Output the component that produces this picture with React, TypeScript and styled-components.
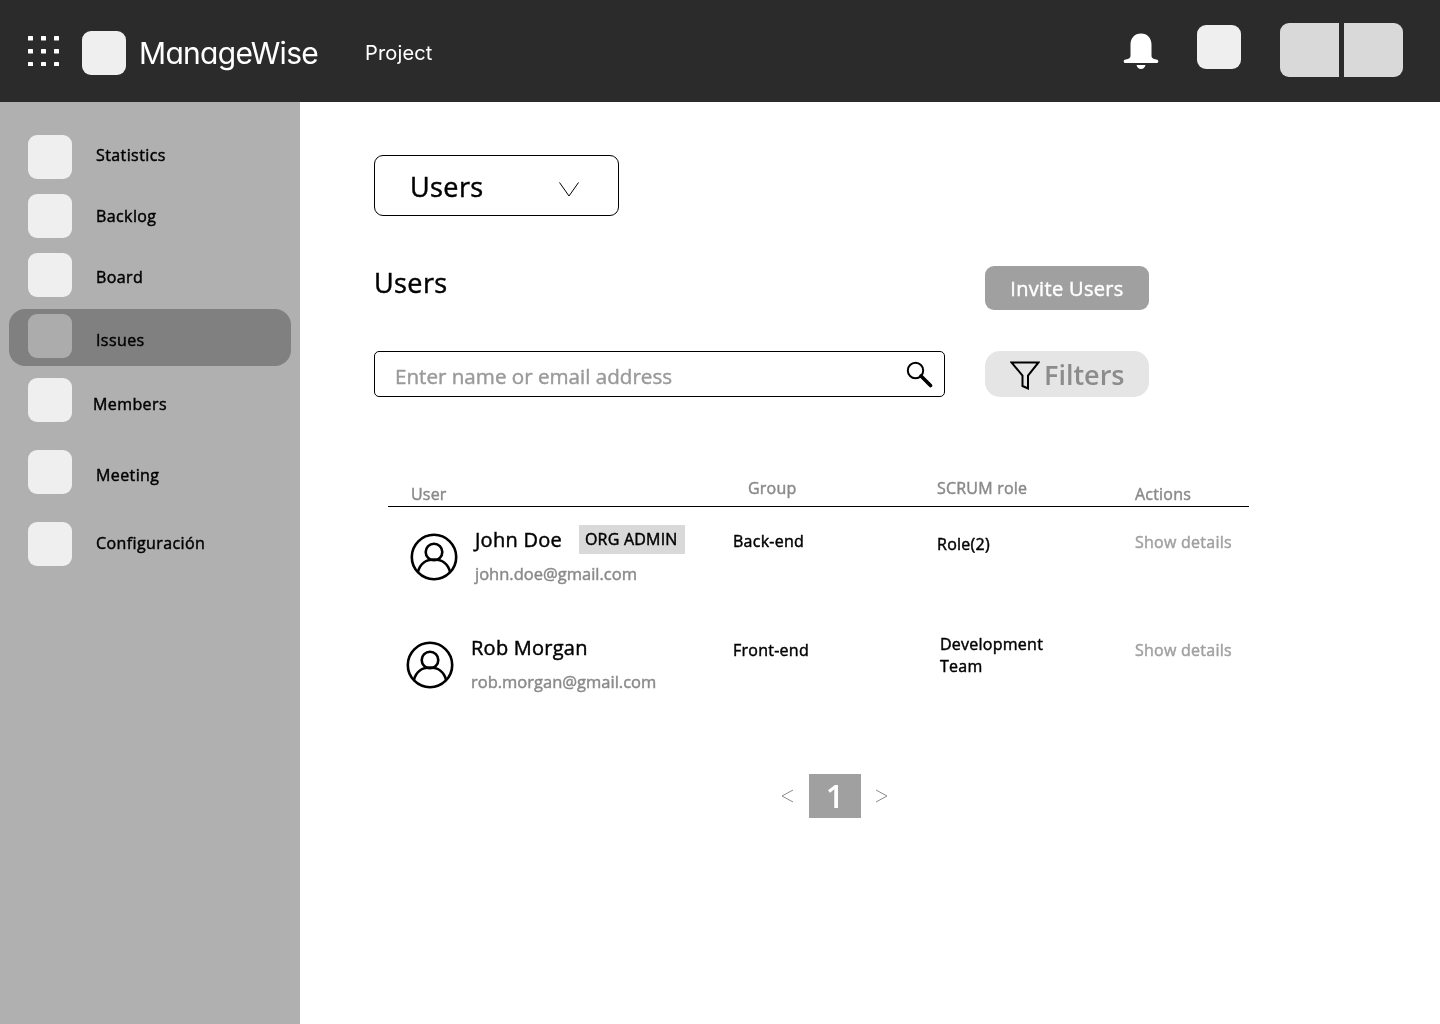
import React from "react";
import styled, { createGlobalStyle, css } from "styled-components";

const Global = createGlobalStyle`
  html, body { margin: 0; padding: 0; background: #fff; }
  body { font-family: "Open Sans", "Liberation Sans", sans-serif; color: #000; }
  * { box-sizing: border-box; }
`;

const medium = css`
  font-weight: 400;
  -webkit-text-stroke: 0.45px currentColor;
`;

const Page = styled.div`
  width: 1440px;
  height: 1024px;
  display: flex;
  flex-direction: column;
  overflow: hidden;
  will-change: transform;
`;

const TopBar = styled.header`
  height: 102px;
  background: #2b2b2b;
  display: flex;
  align-items: center;
  flex: none;
  padding: 4px 0 0 28px;
`;

const GridIcon = styled.svg`
  flex: none;
  margin-bottom: 4px;
`;

const LogoTile = styled.div`
  width: 44px;
  height: 44px;
  border-radius: 9px;
  background: #efefef;
  margin-left: 22px;
  flex: none;
`;

const Brand = styled.div`
  font-family: "Inter", sans-serif;
  font-feature-settings: "cv11" 1;
  font-weight: 400;
  font-size: 30px;
  line-height: 40px;
  letter-spacing: -0.7px;
  color: #fff;
  margin-left: 13px;
  width: 226px;
  white-space: nowrap;
`;

const ProjectLabel = styled.div`
  font-family: "Inter", sans-serif;
  font-weight: 400;
  font-size: 20px;
  letter-spacing: 0.15px;
  line-height: 28px;
  color: #fff;
  width: 789px;
`;

const TopActions = styled.div`
  display: flex;
  align-items: flex-start;
  margin-left: -32px;
  padding-bottom: 6px;
`;

const BellSlot = styled.div`
  width: 38px;
  height: 38px;
  margin-top: 10px;
  flex: none;
`;

const SmallTile = styled.div`
  width: 44px;
  height: 44px;
  border-radius: 9px;
  background: #efefef;
  margin-left: 37px;
  margin-top: 2px;
`;

const SplitGroup = styled.div`
  display: flex;
  gap: 5px;
  margin-left: 39px;
`;

const SplitPart = styled.div<{ $side: "left" | "right" }>`
  width: 59px;
  height: 54px;
  background: #d9d9d9;
  border-radius: ${(p) => (p.$side === "left" ? "9px 0 0 9px" : "0 9px 9px 0")};
`;

const Body = styled.div`
  flex: 1;
  display: flex;
  min-height: 0;
`;

const Sidebar = styled.nav`
  width: 300px;
  flex: none;
  background: #b0b0b0;
  padding-top: 33px;
  display: flex;
  flex-direction: column;
`;

const NavItem = styled.div<{ $gap: number; $active?: boolean }>`
  display: flex;
  align-items: center;
  margin-top: ${(p) => p.$gap}px;
  margin-left: ${(p) => (p.$active ? 9 : 28)}px;
  width: ${(p) => (p.$active ? "282px" : "auto")};
  height: ${(p) => (p.$active ? 57 : 44)}px;
  padding-left: ${(p) => (p.$active ? 19 : 0)}px;
  border-radius: ${(p) => (p.$active ? "16px" : "0")};
  background: ${(p) => (p.$active ? "#808080" : "transparent")};
`;

const NavIcon = styled.div<{ $active?: boolean }>`
  width: 44px;
  height: 44px;
  border-radius: 9px;
  background: ${(p) => (p.$active ? "#acacac" : "#efefef")};
  flex: none;
  margin-bottom: ${(p) => (p.$active ? 3 : 0)}px;
`;

const NavLabel = styled.span<{ $x?: number; $y?: number }>`
  ${medium}
  font-size: 16px;
  letter-spacing: 0.4px;
  line-height: 22px;
  margin-left: ${(p) => p.$x ?? 24}px;
  margin-top: ${(p) => p.$y ?? 0}px;
  color: #000;
`;

const Main = styled.main`
  flex: 1;
  padding: 53px 0 0 74px;
`;

const Dropdown = styled.div`
  ${medium}
  width: 245px;
  height: 61px;
  border: 1px solid #000;
  border-radius: 9px;
  display: flex;
  align-items: center;
  justify-content: space-between;
  padding: 2px 39px 0 35px;
  font-size: 27px;
  letter-spacing: 0.4px;
  line-height: 36px;
`;

const Chevron = styled.svg`
  margin-top: 5px;
`;

const TitleRow = styled.div`
  display: flex;
  align-items: flex-start;
  margin-top: 50px;
  width: 775px;
  justify-content: space-between;
`;

const Title = styled.h1`
  ${medium}
  margin: -1px 0 0;
  font-size: 27px;
  letter-spacing: 0.4px;
  line-height: 36px;
`;

const InviteButton = styled.button`
  ${medium}
  width: 164px;
  height: 44px;
  border: 0;
  border-radius: 9px;
  background: #a0a0a0;
  color: #fff;
  font-family: inherit;
  font-size: 20px;
  letter-spacing: 0.33px;
  padding: 0;
`;

const SearchRow = styled.div`
  display: flex;
  justify-content: space-between;
  width: 775px;
  margin-top: 41px;
`;

const SearchBox = styled.div`
  width: 571px;
  height: 46px;
  border: 1px solid #000;
  border-radius: 5px;
  display: flex;
  align-items: center;
  justify-content: space-between;
  padding: 0 11px 0 20px;
`;

const Placeholder = styled.span`
  ${medium}
  font-size: 20.6px;
  line-height: 28px;
  color: #9a9a9a;
  margin-top: 3px;
`;

const FiltersButton = styled.button`
  width: 164px;
  height: 46px;
  border: 0;
  border-radius: 15px;
  background: #e5e5e5;
  color: #8c8c8c;
  font-family: inherit;
  font-size: 27px;
  font-weight: 600;
  display: flex;
  align-items: center;
  padding: 0 0 0 25px;
  gap: 4px;
`;

const FunnelIcon = styled.svg`
  flex: none;
  margin-top: 4px;
`;

const Table = styled.section`
  margin: 82px 0 0 14px;
  width: 861px;
`;

const HeadRow = styled.div`
  display: grid;
  grid-template-columns: 360px 189px 198px 1fr;
  height: 28px;
  border-bottom: 1px solid #000;
  align-items: flex-start;
`;

const HeadCell = styled.div<{ $x: number; $y: number }>`
  ${medium}
  font-size: 16px;
  letter-spacing: 0.2px;
  line-height: 22px;
  color: #8a8a8a;
  margin-left: ${(p) => p.$x}px;
  margin-top: ${(p) => p.$y}px;
  white-space: nowrap;
`;

const UserRow = styled.div<{ $h: number }>`
  display: grid;
  grid-template-columns: 345px 204px 198px 1fr;
  height: ${(p) => p.$h}px;
  align-items: flex-start;
`;

const UserCell = styled.div<{ $x: number; $y: number }>`
  display: flex;
  align-items: flex-start;
  margin-left: ${(p) => p.$x}px;
  padding-top: ${(p) => p.$y}px;
`;

const Avatar = styled.svg`
  width: 48px;
  height: 48px;
  flex: none;
  margin-right: 17px;
  margin-top: 8px;
`;

const NameLine = styled.div`
  display: flex;
  align-items: center;
  gap: 17px;
  height: 30px;
`;

const UserName = styled.span`
  ${medium}
  font-size: 20px;
  letter-spacing: 0.25px;
  line-height: 28px;
  white-space: nowrap;
`;

const Badge = styled.span`
  ${medium}
  background: #d9d9d9;
  font-size: 16px;
  letter-spacing: 0.22px;
  line-height: 29px;
  height: 29px;
  padding: 0 7px 0 6px;
  margin-bottom: 2px;
  white-space: nowrap;
`;

const Email = styled.div`
  ${medium}
  font-size: 16.5px;
  line-height: 24px;
  color: #8a8a8a;
  margin-top: 7px;
  white-space: nowrap;
`;

const Cell = styled.div<{ $x?: number; $y: number }>`
  ${medium}
  font-size: 16px;
  letter-spacing: 0.25px;
  line-height: 22px;
  margin-left: ${(p) => p.$x ?? 0}px;
  margin-top: ${(p) => p.$y}px;
`;

const DetailsLink = styled.div<{ $y: number }>`
  ${medium}
  font-size: 16px;
  letter-spacing: 0.25px;
  line-height: 22px;
  color: #a0a0a0;
  margin-top: ${(p) => p.$y}px;
  white-space: nowrap;
`;

const Pager = styled.div`
  display: flex;
  align-items: center;
  margin: 0 0 0 393px;
  height: 44px;
`;

const PageCurrent = styled.div`
  width: 52px;
  height: 44px;
  background: #a0a0a0;
  color: #fff;
  font-size: 32px;
  font-weight: 600;
  display: flex;
  align-items: center;
  justify-content: center;
  padding-bottom: 2px;
  margin: 0 14px 0 15px;
`;

const PagerArrow = styled.svg`
  width: 13px;
  height: 16px;
  flex: none;
`;

const avatar = (
  <Avatar viewBox="0 0 48 48" fill="none" stroke="#000" strokeWidth="2.6">
    <circle cx="24" cy="24" r="22.2" />
    <circle cx="24" cy="19" r="8.3" />
    <path d="M8 39c2-8.500 8.500-12.500 16-12.500S38 30.500 40 39" />
  </Avatar>
);

const nav = [
  { label: "Statistics", gap: 0, y: -4 },
  { label: "Backlog", gap: 15, y: 0 },
  { label: "Board", gap: 15, y: 4 },
  { label: "Issues", gap: 12, y: 5, active: true },
  { label: "Members", gap: 12, y: 8, x: 21 },
  { label: "Meeting", gap: 28, y: 5 },
  { label: "Configuración", gap: 28, y: -2 },
];

export default function App() {
  return (
    <Page>
      <Global />
      <TopBar>
        <GridIcon width="32" height="30" viewBox="0 0 32 30" fill="#fff">
          {[0, 13, 26].map((y) =>
            [0, 13, 26].map((x) => <rect key={`${x}-${y}`} x={x} y={y} width="5" height="4.500" rx="0.5" />),
          )}
        </GridIcon>
        <LogoTile />
        <Brand>ManageWise</Brand>
        <ProjectLabel>Project</ProjectLabel>
        <TopActions>
          <BellSlot>
            <svg width="38" height="38" viewBox="0 0 38 38" fill="#fff">
              <path d="M19 0.500c-6.500 0-10.500 4.800-10.500 11v11.500c0 1.800-1.500 3-4.800 3.600-1.500.3-2 1-2 1.900 0 .9.600 1.500 1.700 1.500h31.200c1.100 0 1.700-.6 1.700-1.500 0-.9-.5-1.600-2-1.900-3.300-.6-4.800-1.800-4.800-3.600V11.500c0-6.200-4-11-10.500-11z" />
              <path d="M14.500 32h9c-.6 2.600-2.300 4-4.500 4s-3.900-1.400-4.500-4z" />
            </svg>
          </BellSlot>
          <SmallTile />
          <SplitGroup>
            <SplitPart $side="left" />
            <SplitPart $side="right" />
          </SplitGroup>
        </TopActions>
      </TopBar>
      <Body>
        <Sidebar>
          {nav.map((n) => (
            <NavItem key={n.label} $gap={n.gap} $active={n.active}>
              <NavIcon $active={n.active} />
              <NavLabel $x={n.x} $y={n.y}>{n.label}</NavLabel>
            </NavItem>
          ))}
        </Sidebar>
        <Main>
          <Dropdown>
            Users
            <Chevron width="20" height="15" viewBox="0 0 20 15" fill="none" stroke="#000" strokeWidth="1">
              <path d="M0.500 0.500L10 14L19.500 0.500" />
            </Chevron>
          </Dropdown>
          <TitleRow>
            <Title>Users</Title>
            <InviteButton>Invite Users</InviteButton>
          </TitleRow>
          <SearchRow>
            <SearchBox>
              <Placeholder>Enter name or email address</Placeholder>
              <svg width="28" height="28" viewBox="0 0 28 28" fill="none" stroke="#000">
                <circle cx="10.500" cy="10.500" r="7.700" strokeWidth="2" />
                <path d="M16 16l9.500 9.500" strokeWidth="3.600" strokeLinecap="round" />
              </svg>
            </SearchBox>
            <FiltersButton>
              <FunnelIcon width="30" height="30" viewBox="0 0 30 30" fill="none" stroke="#000" strokeWidth="2">
                <path d="M1.500 1.500h27L18 14.500v13l-5.500-2.500V14.500z" strokeLinejoin="miter" />
              </FunnelIcon>
              Filters
            </FiltersButton>
          </SearchRow>
          <Table>
            <HeadRow>
              <HeadCell $x={23} $y={4}>User</HeadCell>
              <HeadCell $x={0} $y={-2}>Group</HeadCell>
              <HeadCell $x={0} $y={-2}>SCRUM role</HeadCell>
              <HeadCell $x={0} $y={4}>Actions</HeadCell>
            </HeadRow>
            <UserRow $h={108}>
              <UserCell $x={22} $y={18}>
                {avatar}
                <div>
                  <NameLine>
                    <UserName>John Doe</UserName>
                    <Badge>ORG ADMIN</Badge>
                  </NameLine>
                  <Email>john.doe@gmail.com</Email>
                </div>
              </UserCell>
              <Cell $y={23}>Back-end</Cell>
              <Cell $y={26}>Role(2)</Cell>
              <DetailsLink $y={24}>Show details</DetailsLink>
            </UserRow>
            <UserRow $h={159}>
              <UserCell $x={18} $y={18}>
                {avatar}
                <div>
                  <NameLine>
                    <UserName>Rob Morgan</UserName>
                  </NameLine>
                  <Email>rob.morgan@gmail.com</Email>
                </div>
              </UserCell>
              <Cell $y={24}>Front-end</Cell>
              <Cell $x={3} $y={18}>Development<br />Team</Cell>
              <DetailsLink $y={24}>Show details</DetailsLink>
            </UserRow>
            <Pager>
              <PagerArrow viewBox="0 0 13 16" fill="none" stroke="#8a8a8a"><path d="M12 2L1 8l11 6" /></PagerArrow>
              <PageCurrent>1</PageCurrent>
              <PagerArrow viewBox="0 0 13 16" fill="none" stroke="#8a8a8a"><path d="M1 2l11 6-11 6" /></PagerArrow>
            </Pager>
          </Table>
        </Main>
      </Body>
    </Page>
  );
}
